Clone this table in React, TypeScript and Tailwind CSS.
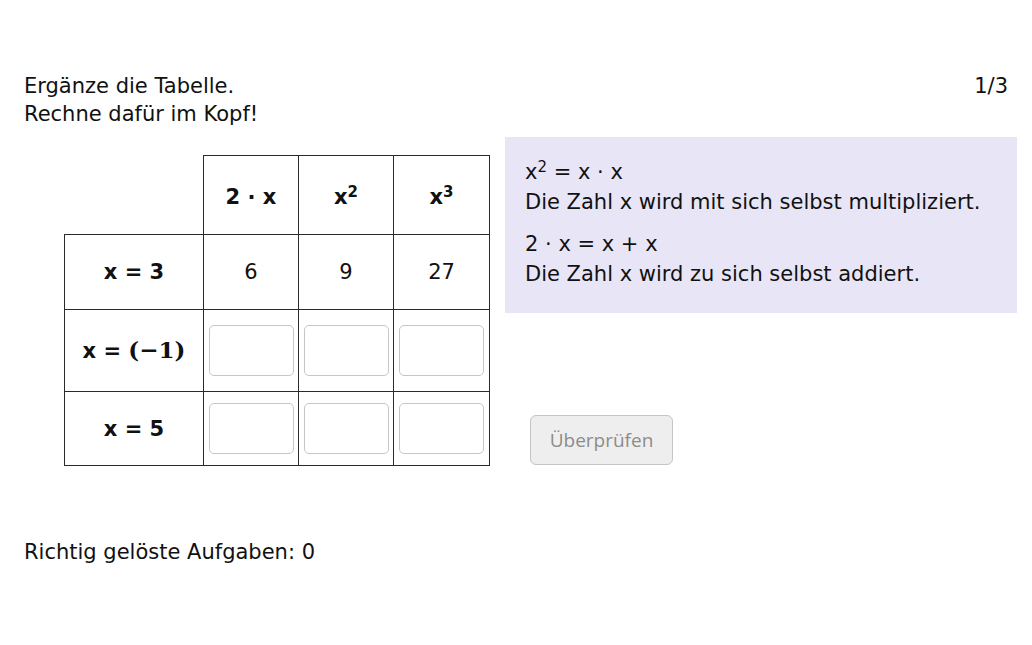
import React from "react";

const Sup = ({ children }: { children: React.ReactNode }) => (
  <sup className="text-[15px]">{children}</sup>
);

const EmptyBox = () => (
  <div className="mx-auto h-[51px] w-[85px] rounded-[5px] border border-[#c6c6c6] bg-white" />
);

const cell = "border border-[#2a2a2a] text-center align-middle";

const App = () => {
  return (
    <div className="min-h-screen bg-white font-['DejaVu_Sans',sans-serif] text-[21px] leading-[28px] text-[#111]">
      <div className="flex justify-between px-6 pt-[72px]">
        <div>
          <p>Ergänze die Tabelle.</p>
          <p>Rechne dafür im Kopf!</p>
        </div>
        <p>1/3</p>
      </div>

      <div className="mt-[9px] flex items-start">
        <table className="ml-16 mt-[18px] table-fixed border-collapse">
          <colgroup>
            <col className="w-[139px]" />
            <col className="w-[95px]" />
            <col className="w-[95px]" />
            <col className="w-[96px]" />
          </colgroup>
          <tbody>
            <tr className="h-[79px]">
              <td className="border-0" />
              <td className={`${cell} pt-1 font-bold`}>2 · x</td>
              <td className={`${cell} pt-1 font-bold`}>
                x<Sup>2</Sup>
              </td>
              <td className={`${cell} pt-1 font-bold`}>
                x<Sup>3</Sup>
              </td>
            </tr>
            <tr className="h-[75px]">
              <td className={`${cell} font-bold`}>x = 3</td>
              <td className={cell}>6</td>
              <td className={cell}>9</td>
              <td className={cell}>27</td>
            </tr>
            <tr className="h-[82px]">
              <td className={`${cell} font-bold`}>
                x ={" "}
                <span className="font-['DejaVu_Serif',serif] text-[23px]">(−1)</span>
              </td>
              <td className={cell}>
                <EmptyBox />
              </td>
              <td className={cell}>
                <EmptyBox />
              </td>
              <td className={cell}>
                <EmptyBox />
              </td>
            </tr>
            <tr className="h-[74px]">
              <td className={`${cell} font-bold`}>x = 5</td>
              <td className={cell}>
                <EmptyBox />
              </td>
              <td className={cell}>
                <EmptyBox />
              </td>
              <td className={cell}>
                <EmptyBox />
              </td>
            </tr>
          </tbody>
        </table>

        <div className="ml-[15px] w-[512px]">
          <div className="h-[176px] bg-[#e8e6f6] px-5 pt-5 leading-[30px]">
            <p>
              x<Sup>2</Sup> = x · x
            </p>
            <p>Die Zahl x wird mit sich selbst multipliziert.</p>
            <p className="mt-3">2 · x = x + x</p>
            <p>Die Zahl x wird zu sich selbst addiert.</p>
          </div>
          <button className="ml-[25px] mt-[102px] h-[50px] w-[143px] rounded-[6px] border border-[#c4c4c4] bg-[#eeeeee] font-['Open_Sans',sans-serif] text-[19px] text-[#8c8c8c]">
            Überprüfen
          </button>
        </div>
      </div>

      <p className="mt-[72px] px-6">Richtig gelöste Aufgaben: 0</p>
    </div>
  );
};

export default App;
